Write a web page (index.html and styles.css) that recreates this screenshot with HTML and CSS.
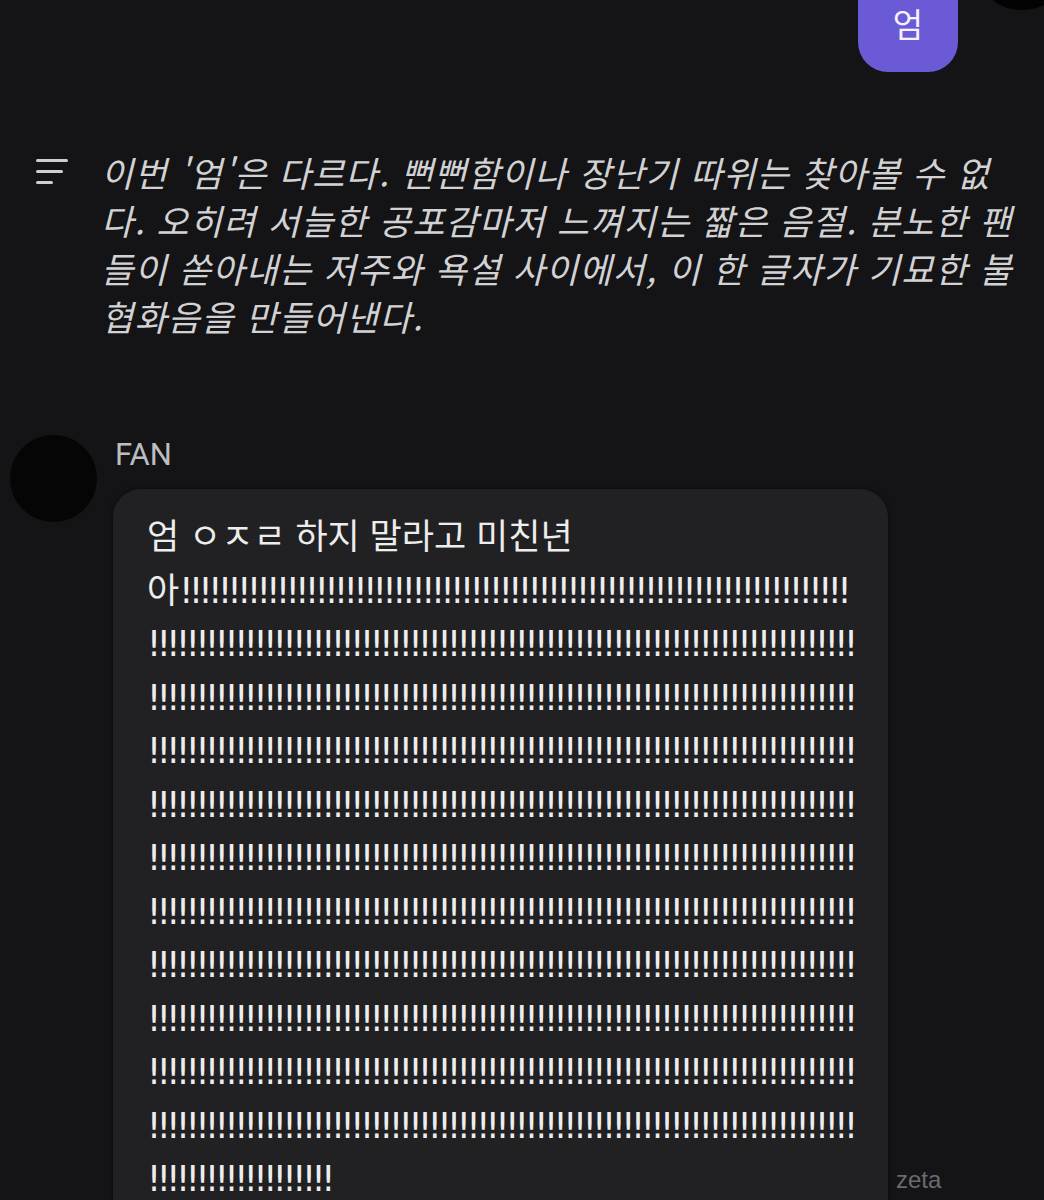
FILE: index.html
```html
<!DOCTYPE html>
<html lang="ko">
<head>
    <meta charset="UTF-8">
    <title>Chat</title>
    <link rel="stylesheet" href="styles.css">
</head>
<body>

<div class="chat">
    <div class="user-row">
        <div class="user-bubble">엄</div>
    </div>

    <div class="narration">
        <svg class="narration-icon" width="34" height="28" viewBox="0 0 34 28">
            <rect x="0" y="1" width="32" height="3" rx="1.5" fill="#cfcfcf"/>
            <rect x="0" y="12" width="27" height="3" rx="1.5" fill="#cfcfcf"/>
            <rect x="0" y="23" width="17" height="3" rx="1.5" fill="#cfcfcf"/>
        </svg>
        <p class="narration-text">이번 '엄'은 다르다. 뻔뻔함이나 장난기 따위는 찾아볼 수 없<br>다. 오히려 서늘한 공포감마저 느껴지는 짧은 음절. 분노한 팬<br>들이 쏟아내는 저주와 욕설 사이에서, 이 한 글자가 기묘한 불<br>협화음을 만들어낸다.</p>
    </div>

    <div class="bot-row">
        <div class="avatar"></div>
        <div class="bot-body">
            <div class="bot-name">FAN</div>
            <div class="bot-bubble">
                <p class="bot-text">엄 ㅇㅈㄹ 하지 말라고 미친년<br>아<span class="bang">!!!!!!!!!!!!!!!!!!!!!!!!!!!!!!!!!!!!!!!!!!!!!!!!!!!!!!!!!!!!!!!!!!!!!</span><br><span class="bang">!!!!!!!!!!!!!!!!!!!!!!!!!!!!!!!!!!!!!!!!!!!!!!!!!!!!!!!!!!!!!!!!!!!!!!!!!</span><br><span class="bang">!!!!!!!!!!!!!!!!!!!!!!!!!!!!!!!!!!!!!!!!!!!!!!!!!!!!!!!!!!!!!!!!!!!!!!!!!</span><br><span class="bang">!!!!!!!!!!!!!!!!!!!!!!!!!!!!!!!!!!!!!!!!!!!!!!!!!!!!!!!!!!!!!!!!!!!!!!!!!</span><br><span class="bang">!!!!!!!!!!!!!!!!!!!!!!!!!!!!!!!!!!!!!!!!!!!!!!!!!!!!!!!!!!!!!!!!!!!!!!!!!</span><br><span class="bang">!!!!!!!!!!!!!!!!!!!!!!!!!!!!!!!!!!!!!!!!!!!!!!!!!!!!!!!!!!!!!!!!!!!!!!!!!</span><br><span class="bang">!!!!!!!!!!!!!!!!!!!!!!!!!!!!!!!!!!!!!!!!!!!!!!!!!!!!!!!!!!!!!!!!!!!!!!!!!</span><br><span class="bang">!!!!!!!!!!!!!!!!!!!!!!!!!!!!!!!!!!!!!!!!!!!!!!!!!!!!!!!!!!!!!!!!!!!!!!!!!</span><br><span class="bang">!!!!!!!!!!!!!!!!!!!!!!!!!!!!!!!!!!!!!!!!!!!!!!!!!!!!!!!!!!!!!!!!!!!!!!!!!</span><br><span class="bang">!!!!!!!!!!!!!!!!!!!!!!!!!!!!!!!!!!!!!!!!!!!!!!!!!!!!!!!!!!!!!!!!!!!!!!!!!</span><br><span class="bang">!!!!!!!!!!!!!!!!!!!!!!!!!!!!!!!!!!!!!!!!!!!!!!!!!!!!!!!!!!!!!!!!!!!!!!!!!</span><br><span class="bang">!!!!!!!!!!!!!!!!!!!</span></p>
            </div>
        </div>
    </div>
</div>

<div class="corner-dot"></div>
<div class="watermark">zeta</div>

</body>
</html>
```

FILE: styles.css
```css
body {
    margin: 0;
    padding: 0;
    background: #141416;
    font-family: "Noto Sans CJK KR", "Noto Sans", sans-serif;
    height: 1200px;
    overflow: hidden;
    position: relative;
}

.chat {
    display: flex;
    flex-direction: column;
}

.user-row {
    display: flex;
    justify-content: flex-end;
    padding-right: 86px;
    margin-top: -30px;
}

.user-bubble {
    width: 100px;
    height: 102px;
    box-sizing: border-box;
    padding-top: 32px;
    background: #6a5ad6;
    border-radius: 30px;
    color: #f4f2ff;
    font-size: 33px;
    line-height: 42px;
    text-align: center;
}

.narration {
    display: flex;
    align-items: flex-start;
    gap: 31px;
    padding-left: 36px;
    margin-top: 76px;
}

.narration-icon {
    flex-shrink: 0;
    margin-top: 10px;
}

.narration-text {
    margin: 0;
    font-size: 35px;
    line-height: 48px;
    letter-spacing: 1.2px;
    font-style: italic;
    color: #d2d2d4;
    white-space: nowrap;
}

.bot-row {
    display: flex;
    align-items: flex-start;
    gap: 16px;
    padding-left: 10px;
    margin-top: 106px;
}

.avatar {
    width: 87px;
    height: 87px;
    border-radius: 50%;
    background: #050505;
    flex-shrink: 0;
    margin-top: -11px;
}

.bot-body {
    display: flex;
    flex-direction: column;
}

.bot-name {
    font-family: Roboto, "Noto Sans", sans-serif;
    font-size: 31px;
    line-height: 34px;
    color: #bdbdbf;
    margin-left: 2px;
    margin-top: -8px;
}

.bot-bubble {
    width: 775px;
    box-sizing: border-box;
    margin-top: 17px;
    padding: 18px 20px 40px 34px;
    background: #212123;
    border-radius: 28px;
    box-shadow: 0 0 4px rgba(0, 0, 0, 0.5);
}

.bot-text {
    margin: 0;
    font-size: 35px;
    line-height: 53.5px;
    color: #ededed;
    white-space: nowrap;
}

.bang {
    font-family: "DejaVu Sans", sans-serif;
    line-height: 1;
    letter-spacing: -4.35px;
}

.corner-dot {
    position: absolute;
    top: -44px;
    right: -16px;
    width: 76px;
    height: 54px;
    border-radius: 50%;
    background: #030303;
}

.watermark {
    position: absolute;
    left: 896px;
    top: 1166px;
    font-family: "Liberation Sans", sans-serif;
    font-size: 24px;
    color: #6b6b6e;
}
```
